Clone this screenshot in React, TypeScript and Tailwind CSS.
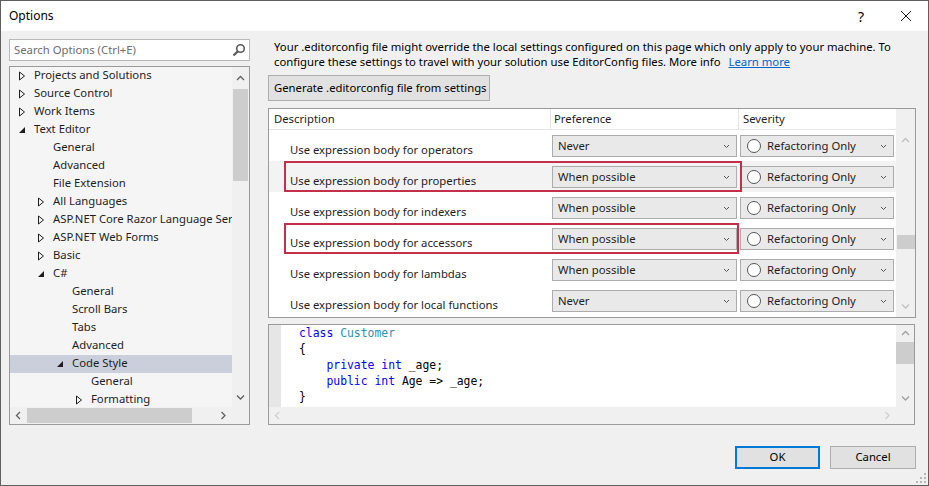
import React from "react";

const font = { fontFamily: '"Noto Sans", "Open Sans", sans-serif' };

type Node = { label: string; level: number; arrow?: "open" | "closed"; selected?: boolean };

const tree: Node[] = [
  { label: "Projects and Solutions", level: 0, arrow: "closed" },
  { label: "Source Control", level: 0, arrow: "closed" },
  { label: "Work Items", level: 0, arrow: "closed" },
  { label: "Text Editor", level: 0, arrow: "open" },
  { label: "General", level: 1 },
  { label: "Advanced", level: 1 },
  { label: "File Extension", level: 1 },
  { label: "All Languages", level: 1, arrow: "closed" },
  { label: "ASP.NET Core Razor Language Services", level: 1, arrow: "closed" },
  { label: "ASP.NET Web Forms", level: 1, arrow: "closed" },
  { label: "Basic", level: 1, arrow: "closed" },
  { label: "C#", level: 1, arrow: "open" },
  { label: "General", level: 2 },
  { label: "Scroll Bars", level: 2 },
  { label: "Tabs", level: 2 },
  { label: "Advanced", level: 2 },
  { label: "Code Style", level: 2, arrow: "open", selected: true },
  { label: "General", level: 3 },
  { label: "Formatting", level: 3, arrow: "closed" },
];

const rows = [
  { desc: "Use expression body for operators", pref: "Never" },
  { desc: "Use expression body for properties", pref: "When possible", boxed: true, shade: true },
  { desc: "Use expression body for indexers", pref: "When possible" },
  { desc: "Use expression body for accessors", pref: "When possible", boxed: true },
  { desc: "Use expression body for lambdas", pref: "When possible" },
  { desc: "Use expression body for local functions", pref: "Never" },
];

function Arrow({ kind }: { kind?: "open" | "closed" }) {
  if (!kind) return <span className="w-[19px] shrink-0" />;
  return (
    <span className="w-[19px] shrink-0 flex items-center justify-start pl-[3px]">
      {kind === "closed" ? (
        <svg width="8" height="10" viewBox="0 0 8 10">
          <path d="M1.5 1 L6.5 5 L1.5 9 Z" fill="none" stroke="#1e1e1e" strokeWidth="1" />
        </svg>
      ) : (
        <svg width="8" height="8" viewBox="0 0 8 8">
          <path d="M7 1 L7 7 L1 7 Z" fill="#1e1e1e" />
        </svg>
      )}
    </span>
  );
}

function Chevron({ dir, color = "#606060" }: { dir: "up" | "down" | "left" | "right"; color?: string }) {
  const d = {
    up: "M1 5 L4.5 1.5 L8 5",
    down: "M1 1.5 L4.5 5 L8 1.5",
    left: "M5 1 L1.5 4.5 L5 8",
    right: "M1.5 1 L5 4.5 L1.5 8",
  }[dir];
  const vert = dir === "up" || dir === "down";
  return (
    <svg width={vert ? 9 : 7} height={vert ? 7 : 9} viewBox={vert ? "0 0 9 7" : "0 0 7 9"}>
      <path d={d} fill="none" stroke={color} strokeWidth="1.3" />
    </svg>
  );
}

function SmallChevron() {
  return (
    <svg width="7" height="5" viewBox="0 0 7 5">
      <path d="M1 1 L3.5 3.5 L6 1" fill="none" stroke="#555" strokeWidth="1" />
    </svg>
  );
}

function Combo({ children, width }: { children: React.ReactNode; width: string }) {
  return (
    <div
      className={`${width} h-[22px] border border-[#acacac] bg-[#e9e9e9] flex items-center pl-[5px] pr-[6px] text-[#1e1e1e] whitespace-nowrap`}
    >
      <div className="flex-1 flex items-center">{children}</div>
      <SmallChevron />
    </div>
  );
}

export default function App() {
  return (
    <div style={font} className="w-[929px] h-[486px] border border-[#5f5f5f] bg-[#f0f0f0] flex flex-col text-[11.3px] text-[#1e1e1e] overflow-hidden relative">
      {/* title bar */}
      <div className="h-[30px] bg-white flex items-center shrink-0">
        <span className="ml-[8px] text-[12px] text-black">Options</span>
        <span className="ml-auto mr-[36px] text-[14px] text-black">?</span>
        <svg width="12" height="12" viewBox="0 0 12 12" className="mr-[16px]">
          <path d="M1 1 L11 11 M11 1 L1 11" stroke="#1e1e1e" strokeWidth="1" />
        </svg>
      </div>

      <div className="flex flex-1 pt-[8px]">
        {/* left column */}
        <div className="ml-[8px] w-[241px] flex flex-col shrink-0">
          <div className="h-[22px] border border-[#b9b9b9] bg-white flex items-center pl-[4px] pr-[3px]">
            <span className="flex-1 text-[#6d6d6d]">Search Options (Ctrl+E)</span>
            <svg width="14" height="14" viewBox="0 0 14 14">
              <circle cx="8.5" cy="5.5" r="3.8" fill="none" stroke="#5a5a5a" strokeWidth="1.6" />
              <path d="M5.8 8.2 L1.5 12.5" stroke="#5a5a5a" strokeWidth="2.2" />
            </svg>
          </div>
          <div className="mt-[5px] h-[359px] border border-[#9a9a9a] bg-[#f5f5f5] flex flex-col">
            <div className="flex flex-1 min-h-0">
              <div className="flex-1 overflow-hidden">
                {tree.map((n, i) => (
                  <div
                    key={i}
                    className={`h-[18px] flex items-center whitespace-nowrap ${n.selected ? "bg-[#cbcfdb]" : ""}`}
                    style={{ paddingLeft: 5 + n.level * 19 }}
                  >
                    <Arrow kind={n.arrow} />
                    <span className="leading-[18px] pb-[2px]">{n.label}</span>
                  </div>
                ))}
              </div>
              <div className="w-[17px] bg-[#f0f0f0] flex flex-col items-center">
                <div className="h-[20px] flex items-center justify-center pt-[2px]">
                  <Chevron dir="up" />
                </div>
                <div className="w-[15px] h-[92px] mt-[2px] bg-[#cdcdcd]" />
                <div className="flex-1" />
                <div className="h-[20px] flex items-center justify-center">
                  <Chevron dir="down" />
                </div>
              </div>
            </div>
            <div className="h-[17px] flex bg-[#f0f0f0]">
              <div className="flex-1 flex items-center">
                <div className="w-[17px] flex justify-center">
                  <Chevron dir="left" />
                </div>
                <div className="w-[165px] h-[15px] bg-[#cdcdcd]" />
                <div className="flex-1" />
                <div className="w-[17px] flex justify-center">
                  <Chevron dir="right" />
                </div>
              </div>
              <div className="w-[17px] bg-[#f0f0f0]" />
            </div>
          </div>
        </div>

        {/* right column */}
        <div className="ml-[18px] w-[648px] flex flex-col">
          <div className="ml-[6px] leading-[15px] text-black whitespace-nowrap">
            Your .editorconfig file might override the local settings configured on this page which only apply to your machine. To
            <br />
            configure these settings to travel with your solution use EditorConfig files. More info
            <span className="ml-[8px] text-[#0066cc] underline">Learn more</span>
          </div>
          <div className="mt-[6px] w-[222px] h-[26px] border border-[#adadad] bg-[#e1e1e1] flex items-center pl-[5px] text-black whitespace-nowrap">
            Generate .editorconfig file from settings
          </div>

          {/* table */}
          <div className="mt-[7px] h-[210px] border border-[#9a9a9a] bg-white flex">
            <div className="w-[627px] flex flex-col">
              <div className="h-[21px] flex border-b border-[#e5e5e5]">
                <div className="w-[282px] pl-[5px] flex items-center border-r border-[#e5e5e5]">Description</div>
                <div className="w-[188px] pl-[3px] flex items-center border-r border-[#e5e5e5]">Preference</div>
                <div className="flex-1 pl-[4px] flex items-center">Severity</div>
              </div>
              {rows.map((r, i) => (
                <div key={i} className={`h-[31px] flex relative ${r.shade ? "bg-[#f3f3f3]" : ""}`}>
                  <div className="w-[283px] pl-[21px] pt-[12px] leading-[16px] whitespace-nowrap">{r.desc}</div>
                  <div className="pt-[5px]">
                    <Combo width="w-[185px]">{r.pref}</Combo>
                  </div>
                  <div className="pt-[5px] ml-[3px]">
                    <Combo width="w-[154px]">
                      <span className="w-[14px] h-[14px] rounded-full border border-[#555] bg-white mr-[6px] ml-[1px]" />
                      Refactoring Only
                    </Combo>
                  </div>
                  {r.boxed && (
                    <div
                      className={`absolute left-[15px] top-0 h-[31px] border-2 border-[#c4304a] pointer-events-none ${i === 1 ? "w-[458px]" : "w-[455px]"}`}
                    />
                  )}
                </div>
              ))}
            </div>
            <div className="flex-1 bg-[#f0f0f0] flex flex-col items-center">
              <div className="h-[20px]" />
              <div className="h-[22px] flex items-center justify-center">
                <Chevron dir="up" color="#c0c0c0" />
              </div>
              <div className="h-[84px]" />
              <div className="w-[18px] h-[14px] bg-[#cdcdcd]" />
              <div className="flex-1" />
              <div className="h-[22px] flex items-center justify-center">
                <Chevron dir="down" color="#c0c0c0" />
              </div>
            </div>
          </div>

          {/* code preview */}
          <div className="mt-[6px] h-[101px] w-[647px] border border-[#9a9a9a] bg-[#f0f0f0] flex flex-col">
            <div className="flex flex-1 min-h-0">
              <div className="w-[12px] bg-[#e6e6e6]" />
              <div
                className="flex-1 bg-white pl-[18px] text-[11.4px] leading-[16px] whitespace-pre text-black"
                style={{ fontFamily: '"DejaVu Sans Mono", "Liberation Mono", monospace' }}
              >
                <div>
                  <span className="text-[#0000ff]">class</span> <span className="text-[#2b91af]">Customer</span>
                </div>
                <div>{"{"}</div>
                <div>
                  {"    "}
                  <span className="text-[#0000ff]">private</span> <span className="text-[#0000ff]">int</span> _age;
                </div>
                <div>
                  {"    "}
                  <span className="text-[#0000ff]">public</span> <span className="text-[#0000ff]">int</span> Age {"=>"} _age;
                </div>
                <div>{"}"}</div>
              </div>
              <div className="w-[18px] bg-[#f0f0f0] flex flex-col items-center">
                <div className="h-[17px] flex items-center justify-center">
                  <Chevron dir="up" color="#a0a0a0" />
                </div>
                <div className="w-[18px] h-[22px] bg-[#cdcdcd]" />
                <div className="flex-1" />
                <div className="h-[17px] flex items-center justify-center">
                  <Chevron dir="down" color="#a0a0a0" />
                </div>
              </div>
            </div>
            <div className="h-[17px] flex items-center">
              <div className="w-[17px] flex justify-center">
                <Chevron dir="left" color="#d0d0d0" />
              </div>
              <div className="flex-1" />
              <div className="w-[17px] flex justify-center mr-[18px]">
                <Chevron dir="right" color="#d0d0d0" />
              </div>
            </div>
          </div>

          {/* buttons */}
          <div className="mt-[21px] flex justify-end gap-[10px]">
            <div className="w-[85px] h-[23px] border-2 border-[#0078d7] bg-[#e1e1e1] flex items-center justify-center text-black">
              OK
            </div>
            <div className="w-[86px] h-[23px] border border-[#adadad] bg-[#e1e1e1] flex items-center justify-center text-black">
              Cancel
            </div>
          </div>
        </div>
      </div>

      {/* resize grip */}
      <svg width="10" height="10" viewBox="0 0 10 10" className="absolute right-[2px] bottom-[2px]">
        {[
          [8, 0],
          [8, 4],
          [4, 4],
          [8, 8],
          [4, 8],
          [0, 8],
        ].map(([x, y], i) => (
          <rect key={i} x={x} y={y} width="2" height="2" fill="#b8b8b8" />
        ))}
      </svg>
    </div>
  );
}
